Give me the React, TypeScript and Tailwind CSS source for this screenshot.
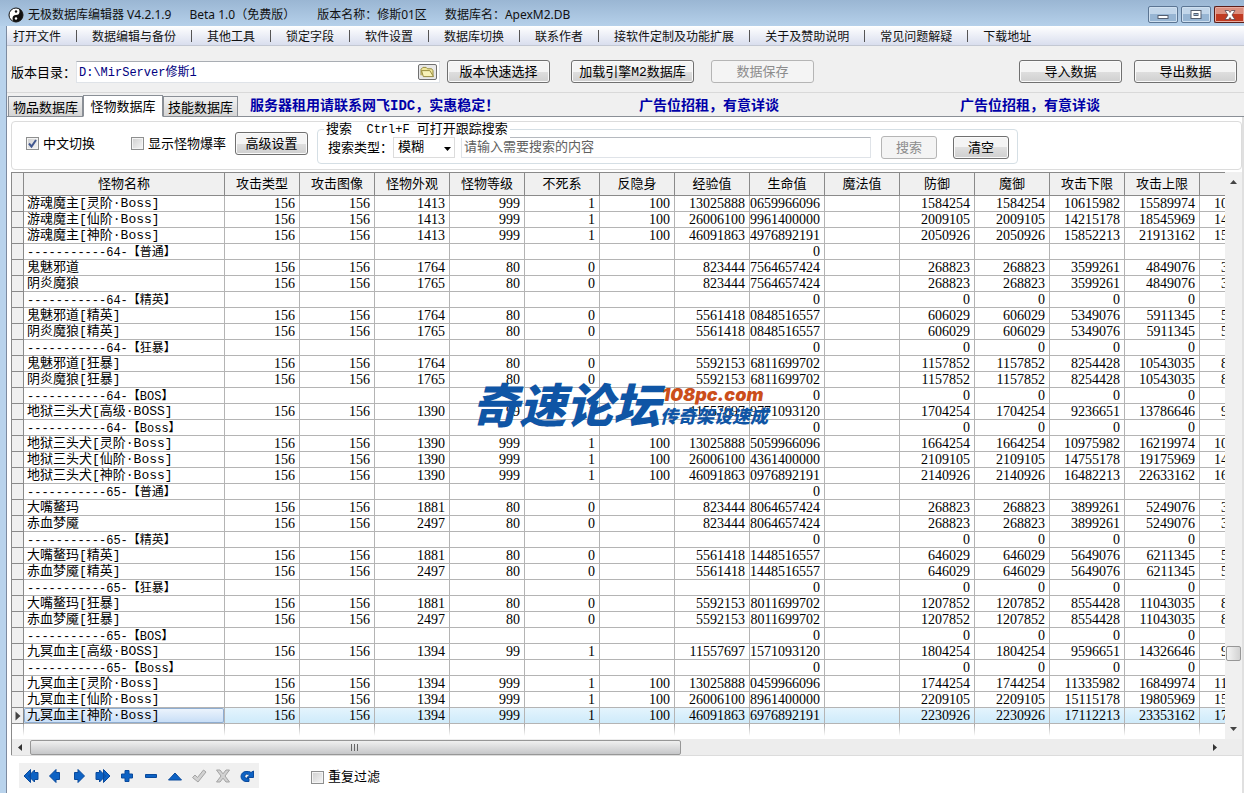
import { useState } from "react";
import clsx from "clsx";

const menuItems = [
  "打开文件",
  "数据编辑与备份",
  "其他工具",
  "锁定字段",
  "软件设置",
  "数据库切换",
  "联系作者",
  "接软件定制及功能扩展",
  "关于及赞助说明",
  "常见问题解疑",
  "下载地址",
];

const tabs = ["物品数据库", "怪物数据库", "技能数据库"];

const columns = [
  "攻击类型",
  "攻击图像",
  "怪物外观",
  "怪物等级",
  "不死系",
  "反隐身",
  "经验值",
  "生命值",
  "魔法值",
  "防御",
  "魔御",
  "攻击下限",
  "攻击上限",
];

// name | type | image | look | level | undead | anti-hide | exp | hp | mp | def | mdef | min | max | next column
const data = `
游魂魔主[灵阶·Boss]|156|156|1413|999|1|100|13025888|0659966096||1584254|1584254|10615982|15589974|10
游魂魔主[仙阶·Boss]|156|156|1413|999|1|100|26006100|9961400000||2009105|2009105|14215178|18545969|14
游魂魔主[神阶·Boss]|156|156|1413|999|1|100|46091863|4976892191||2050926|2050926|15852213|21913162|15
-----------64-【普通】||||||||0||||||
鬼魅邪道|156|156|1764|80|0||823444|7564657424||268823|268823|3599261|4849076|3
阴炎魔狼|156|156|1765|80|0||823444|7564657424||268823|268823|3599261|4849076|3
-----------64-【精英】||||||||0||0|0|0|0|
鬼魅邪道[精英]|156|156|1764|80|0||5561418|0848516557||606029|606029|5349076|5911345|5
阴炎魔狼[精英]|156|156|1765|80|0||5561418|0848516557||606029|606029|5349076|5911345|5
-----------64-【狂暴】||||||||0||0|0|0|0|
鬼魅邪道[狂暴]|156|156|1764|80|0||5592153|6811699702||1157852|1157852|8254428|10543035|8
阴炎魔狼[狂暴]|156|156|1765|80|0||5592153|6811699702||1157852|1157852|8254428|10543035|8
-----------64-【BOS】||||||||0||0|0|0|0|
地狱三头犬[高级·BOSS]|156|156|1390|99|1||11557697|9771093120||1704254|1704254|9236651|13786646|9
-----------64-【Boss】||||||||0||0|0|0|0|
地狱三头犬[灵阶·Boss]|156|156|1390|999|1|100|13025888|5059966096||1664254|1664254|10975982|16219974|10
地狱三头犬[仙阶·Boss]|156|156|1390|999|1|100|26006100|4361400000||2109105|2109105|14755178|19175969|14
地狱三头犬[神阶·Boss]|156|156|1390|999|1|100|46091863|0976892191||2140926|2140926|16482213|22633162|16
-----------65-【普通】||||||||0||||||
大嘴鳌玛|156|156|1881|80|0||823444|8064657424||268823|268823|3899261|5249076|3
赤血梦魇|156|156|2497|80|0||823444|8064657424||268823|268823|3899261|5249076|3
-----------65-【精英】||||||||0||0|0|0|0|
大嘴鳌玛[精英]|156|156|1881|80|0||5561418|1448516557||646029|646029|5649076|6211345|5
赤血梦魇[精英]|156|156|2497|80|0||5561418|1448516557||646029|646029|5649076|6211345|5
-----------65-【狂暴】||||||||0||0|0|0|0|
大嘴鳌玛[狂暴]|156|156|1881|80|0||5592153|8011699702||1207852|1207852|8554428|11043035|8
赤血梦魇[狂暴]|156|156|2497|80|0||5592153|8011699702||1207852|1207852|8554428|11043035|8
-----------65-【BOS】||||||||0||0|0|0|0|
九冥血主[高级·BOSS]|156|156|1394|99|1||11557697|1571093120||1804254|1804254|9596651|14326646|9
-----------65-【Boss】||||||||0||0|0|0|0|
九冥血主[灵阶·Boss]|156|156|1394|999|1|100|13025888|0459966096||1744254|1744254|11335982|16849974|11
九冥血主[仙阶·Boss]|156|156|1394|999|1|100|26006100|8961400000||2209105|2209105|15115178|19805969|15
九冥血主[神阶·Boss]|156|156|1394|999|1|100|46091863|6976892191||2230926|2230926|17112213|23353162|17
`;

const rows = data
  .trim()
  .split("\n")
  .map((line) => line.split("|"));

const navIcons = [
  { label: "第一条", path: "M5.500 8L11.500 2v2.500H15v7h-3.500V14zM1 8L7.500 1.500V14.500z" },
  { label: "上一条", path: "M2.500 8L9 1.500V4.500h3.500v7H9v3z" },
  { label: "下一条", path: "M13.500 8L7 1.500V4.500H3.500v7H7v3z" },
  { label: "最后一条", path: "M10.500 8L4.500 2v2.500H1v7h3.500V14zM15 8L8.500 1.500V14.500z" },
  { label: "添加", path: "M6 2.500h4V6h3.500v4H10v3.500H6V10H2.500V6H6z" },
  { label: "删除", path: "M2.500 6.500h11v3h-11z" },
  { label: "编辑", path: "M1.500 12L8 5l6.500 7z" },
  { label: "提交", path: "M1.500 9.500L4 7l2.500 2.500L12.500 2 15 4 7 14z", off: true },
  { label: "取消", path: "M1.500 2H5l3 3.800L11 2h3.500L10 8l4.500 6H11l-3-3.800L5 14H1.500L6 8z", off: true },
  {
    label: "刷新",
    path: "M10 13.500H7A5 5 0 0 1 7 3.500h2.500a5 5 0 0 1 2.500 1l2.500-1.500V9.500H8l2-2A2.200 2.200 0 1 0 8 10.500h2z",
  },
];

function Button({
  children,
  className,
  disabled,
}: {
  children: React.ReactNode;
  className?: string;
  disabled?: boolean;
}) {
  return (
    <button
      type="button"
      disabled={disabled}
      className={clsx(
        "h-[23px] shrink-0 rounded-[3px] border pt-[3px] text-center leading-[18px] whitespace-nowrap",
        disabled
          ? "border-[#b5b5b5] bg-[#f4f4f4] text-[#8c8c8c]"
          : "border-[#707070] bg-linear-to-b from-[#f4f4f4] from-50% via-[#dfdfdf] via-50% to-[#cfcfcf] text-black shadow-[inset_0_0_0_1px_#fafafa]",
        className
      )}
    >
      {children}
    </button>
  );
}

function Check({ label, defaultChecked }: { label: string; defaultChecked?: boolean }) {
  const [checked, setChecked] = useState(!!defaultChecked);
  return (
    <label className="flex items-center gap-1 whitespace-nowrap leading-4">
      <span className="relative flex size-[13px]">
        <input
          type="checkbox"
          checked={checked}
          onChange={(e) => setChecked(e.target.checked)}
          className="size-[13px] appearance-none border border-[#8e8f8f] bg-linear-to-br from-[#cfcfcf] to-[#f6f6f6] shadow-[inset_0_0_0_1px_#f4f4f4]"
        />
        {checked && (
          <svg viewBox="0 0 13 13" className="pointer-events-none absolute inset-0 size-[13px]">
            <path d="M3 6.500l2.500 3L10 3" fill="none" stroke="#41578f" strokeWidth="2" />
          </svg>
        )}
      </span>
      <span className="pt-[2px]">{label}</span>
    </label>
  );
}

function TitleBar() {
  return (
    <header className="flex h-[26px] items-center bg-linear-to-b from-[#9ab6d3] to-[#b5d0ea] pl-2 text-xs">
      <svg viewBox="0 0 16 16" className="mt-1 mr-1 size-4">
        <circle cx="8" cy="8" r="7" fill="#fff" stroke="#111" />
        <path d="M8 1a7 7 0 0 1 0 14 3.500 3.500 0 0 1 0-7 3.500 3.500 0 0 0 0-7z" fill="#111" />
        <circle cx="8" cy="4.500" r="1.200" fill="#111" />
        <circle cx="8" cy="11.500" r="1.200" fill="#fff" />
      </svg>
      <h1 className="mt-1 flex gap-[18px] whitespace-nowrap font-['Noto_Sans','Noto_Sans_CJK_SC',sans-serif] leading-5 text-[#111]">
        <span>无极数据库编辑器 V4.2.1.9</span>
        <span className="mr-1">Beta 1.0（免费版）</span>
        <span>版本名称：修斯01区</span>
        <span>数据库名：ApexM2.DB</span>
      </h1>
      <div className="ml-auto flex gap-[3px] self-end pb-[3px]">
        <button
          type="button"
          aria-label="最小化"
          className="flex h-[17px] w-[30px] items-center justify-center rounded-xs border border-[#5b7593] bg-linear-to-b from-[#c2d6ea] from-50% to-[#97b5d3] to-50% shadow-[inset_0_0_0_1px_#cfe0f0]"
        >
          <svg viewBox="0 0 12 10" className="h-[10px] w-3">
            <rect x="1" y="5.500" width="10" height="3" fill="#fff" stroke="#555f70" />
          </svg>
        </button>
        <button
          type="button"
          aria-label="最大化"
          className="flex h-[17px] w-[30px] items-center justify-center rounded-xs border border-[#5b7593] bg-linear-to-b from-[#c2d6ea] from-50% to-[#97b5d3] to-50% shadow-[inset_0_0_0_1px_#cfe0f0]"
        >
          <svg viewBox="0 0 12 10" className="h-[10px] w-3">
            <rect x="1" y=".5" width="10" height="8" fill="#fff" stroke="#555f70" />
            <rect x="4" y="3.500" width="4" height="2" fill="#9db9d6" stroke="#555f70" />
          </svg>
        </button>
        <button
          type="button"
          aria-label="关闭"
          className="flex h-[17px] w-[30px] items-center justify-center rounded-l-xs border border-r-0 border-[#5c1d17] bg-linear-to-b from-[#dc8f7f] from-50% to-[#c03a22] to-50% shadow-[inset_0_0_0_1px_#e9aca0]"
        >
          <svg viewBox="0 0 12 10" className="h-[10px] w-3">
            <path
              d="M1 .5h3.500L6 2.500 7.500.5H11L8 5l3 4.500H7.500L6 7.500l-1.500 2H1L4 5z"
              fill="#fff"
              stroke="#5a4650"
              strokeWidth=".8"
            />
          </svg>
        </button>
      </div>
    </header>
  );
}

function MonsterTable() {
  return (
    <table className="w-full table-fixed border-separate border-spacing-0">
      <colgroup>
        <col className="w-3" />
        <col className="w-[201px]" />
        {columns.map((c) => (
          <col key={c} className="w-[75px]" />
        ))}
        <col />
      </colgroup>
      <thead>
        <tr className="h-6 bg-[#f0f0f0]">
          <th className="border-y border-r border-[#8a8a8a]" />
          <th className="border-y border-r border-[#8a8a8a] px-0 pt-[2px] pb-0 font-normal leading-5">
            怪物名称
          </th>
          {columns.map((c) => (
            <th
              key={c}
              className="border-y border-r border-[#8a8a8a] px-0 pt-[2px] pb-0 font-normal leading-5"
            >
              {c}
            </th>
          ))}
          <th className="border-y border-[#8a8a8a]" />
        </tr>
      </thead>
      <tbody>
        {rows.map(([name, ...cells], i) => {
          const selected = i === rows.length - 1;
          return (
            <tr
              key={i}
              className={clsx("h-4", selected && "bg-linear-to-b from-[#e4f4fd] to-[#cdeafa]")}
            >
              <td className="border-r border-b border-[#8a8a8a] bg-[#f0f0f0] p-0">
                {selected && (
                  <svg viewBox="0 0 6 10" className="ml-[3px] h-[10px] w-[6px]">
                    <path d="M.5.500L5.500 5l-5 4.500z" fill="#444" />
                  </svg>
                )}
              </td>
              <td className="border-r border-b border-[#b4b4b4] p-0">
                <div
                  className={clsx(
                    "h-[15px] overflow-hidden pl-[3px] whitespace-nowrap",
                    name.startsWith("-") ? "text-xs leading-[18px]" : "leading-4",
                    selected &&
                      "rounded-xs bg-linear-to-b from-[#eef5fd] to-[#c6ddf6] shadow-[inset_0_0_0_1px_#8fadd0]"
                  )}
                >
                  {name}
                </div>
              </td>
              {cells.map((cell, j) =>
                j < columns.length ? (
                  <td key={j} className="border-r border-b border-[#b4b4b4] p-0">
                    <div className="flex h-[15px] justify-end overflow-hidden pr-1 font-['Liberation_Serif',serif] text-sm leading-4">
                      {cell}
                    </div>
                  </td>
                ) : (
                  <td key={j} className="border-b border-[#b4b4b4] p-0">
                    <div
                      className={clsx(
                        "h-[15px] overflow-hidden font-['Liberation_Serif',serif] text-sm leading-4",
                        cell.length > 1 ? "pl-[14px]" : "pl-[21px]"
                      )}
                    >
                      {cell}
                    </div>
                  </td>
                )
              )}
            </tr>
          );
        })}
        {/* column rules fade out below the last record */}
        <tr className="h-[15px]">
          {Array.from({ length: columns.length + 2 }, (_, i) => (
            <td
              key={i}
              className="bg-linear-to-b from-[#a8a8a8] to-white bg-[length:1px_12px] bg-right-top bg-no-repeat p-0"
            />
          ))}
          <td />
        </tr>
      </tbody>
    </table>
  );
}

export default function App() {
  const [tab, setTab] = useState("怪物数据库");

  return (
    <div className="flex min-h-screen flex-col overflow-hidden bg-[#b9d3ec] font-['Liberation_Mono','Noto_Sans_CJK_SC',monospace] text-[13px] text-black">
      <TitleBar />

      <div className="ml-[6px] flex flex-1 flex-col border-l border-[#7d8ba0] bg-[#f0f0f0]">
        <nav className="flex h-5 items-center border-b border-[#c3c8d3] bg-linear-to-b from-white to-[#d9deee] pl-[6px] font-['Noto_Sans_CJK_SC',sans-serif] text-xs">
          {menuItems.map((item, i) => (
            <div key={item} className="flex items-center">
              {i > 0 && <span className="mx-[15px] h-3 w-px bg-[#555]" />}
              <a href="#" className="whitespace-nowrap leading-4 text-[#111]">
                {item}
              </a>
            </div>
          ))}
        </nav>

        {/* Toolbar */}
        <div className="flex h-[47px] items-center border-b border-[#d9d9d9] pt-[5px] pr-[7px] pl-1">
          <label htmlFor="dir" className="w-[65px] shrink-0 pt-1 whitespace-nowrap">
            版本目录：
          </label>
          <div className="flex h-[22px] max-w-[364px] flex-1 items-center border border-[#dfe3e8] border-t-[#a9adb3] bg-white">
            <input
              id="dir"
              defaultValue="D:\MirServer修斯1"
              className="min-w-0 flex-1 bg-transparent px-[2px] pt-[2px] text-xs text-[#000080] outline-none"
            />
            <button
              type="button"
              aria-label="浏览"
              className="mr-[2px] flex h-4 w-[19px] items-center justify-center rounded-xs border border-[#707070] bg-[#e8e8e8]"
            >
              <svg viewBox="0 0 16 13" className="h-3 w-[15px]">
                <path d="M1 10V3.500L3 1.500h3.500L8 3h4.500L14 5v6" fill="#efe69a" stroke="#8f8335" />
                <path d="M1.500 5h9l4 6.500h-11z" fill="#f8f2b8" stroke="#8f8335" />
              </svg>
            </button>
          </div>
          <Button className="ml-[7px] w-[103px]">版本快速选择</Button>
          <Button className="ml-[21px] w-[123px]">加载引擎M2数据库</Button>
          <Button className="ml-[17px] w-[103px]" disabled>
            数据保存
          </Button>
          <Button className="ml-auto w-[103px]">导入数据</Button>
          <Button className="ml-3 w-[103px]">导出数据</Button>
        </div>

        {/* Tabs and ads */}
        <div className="flex h-6 items-end border-b border-[#8a8f96] pl-px font-['Noto_Sans_CJK_SC',sans-serif]">
          {tabs.map((t) => (
            <button
              key={t}
              type="button"
              onClick={() => setTab(t)}
              className={clsx(
                "whitespace-nowrap border border-[#8a8f96] text-center leading-5",
                t === tab
                  ? "-mb-px h-[22px] w-20 border-b-white bg-white"
                  : "h-5 w-[75px] border-b-0 bg-linear-to-b from-[#f2f2f2] to-[#d4d4d4]"
              )}
            >
              {t}
            </button>
          ))}
          <div className="ml-3 grid h-6 flex-1 grid-cols-[389px_321px_auto] items-center pt-1 whitespace-nowrap font-['Liberation_Mono','Noto_Sans_CJK_SC',monospace] text-sm font-bold leading-5 text-[#0000a8]">
            <span>服务器租用请联系网飞IDC，实惠稳定！</span>
            <span>广告位招租，有意详谈</span>
            <span>广告位招租，有意详谈</span>
          </div>
        </div>

        <main className="flex-1 border-r-2 border-[#e0e0e0] bg-white pl-1">
          {/* Filter bar */}
          <section className="mt-1 flex h-[49px] items-center rounded border border-[#dcdcdc] pb-1 pl-[14px]">
            <Check label="中文切换" defaultChecked />
            <div className="ml-9">
              <Check label="显示怪物爆率" />
            </div>
            <Button className="ml-[9px] w-[73px]">高级设置</Button>
            <fieldset className="relative mt-[6px] ml-[9px] flex h-[35px] items-center rounded border border-[#d5dfe5] pt-[2px] pr-2 pl-[10px]">
              <legend className="absolute -top-[8px] left-[6px] bg-white px-[2px] leading-[15px] whitespace-pre">
                搜索<span className="text-xs">  Ctrl+F </span>可打开跟踪搜索
              </legend>
              <label htmlFor="kind" className="w-[65px] pt-[2px] whitespace-nowrap leading-4">
                搜索类型：
              </label>
              <div className="relative">
                <select
                  id="kind"
                  className="h-[21px] w-[62px] appearance-none border border-[#dcdcdc] bg-white pt-px pl-1 leading-4"
                >
                  <option>模糊</option>
                  <option>精确</option>
                </select>
                <svg
                  viewBox="0 0 7 4"
                  className="pointer-events-none absolute top-[10px] right-1 h-1 w-[7px]"
                >
                  <path d="M0 0h7L3.500 4z" />
                </svg>
              </div>
              <input
                aria-label="搜索内容"
                placeholder="请输入需要搜索的内容"
                className="ml-[6px] h-[21px] w-[410px] border border-[#dfe3e8] border-t-[#b5b9bf] bg-white px-[2px] leading-4 placeholder:text-[#606060]"
              />
              <Button className="ml-[10px] w-14" disabled>
                搜索
              </Button>
              <Button className="ml-4 w-14">清空</Button>
            </fieldset>
          </section>

          {/* Grid */}
          <section className="mt-[2px] border-l border-[#8a8a8a]">
            <div className="flex">
              <div className="relative min-w-0 flex-1">
                <MonsterTable />
                <div className="pointer-events-none absolute top-[205px] left-[460px] flex whitespace-nowrap font-['Noto_Sans_CJK_SC',sans-serif] font-black italic">
                  <span className="text-[47px] leading-[52px] text-[#0f55a5]">奇速论坛</span>
                  <span className="flex flex-col pt-2">
                    <span className="pl-[2px] font-['Inter','Noto_Sans_CJK_SC',sans-serif] text-lg leading-5 text-[#cb4e1b]">
                      108pc.com
                    </span>
                    <span className="text-lg leading-5 text-[#0f55a5]">传奇架设速成</span>
                  </span>
                </div>
              </div>
              <div className="flex w-[17px] flex-col items-center bg-[#f0f0f0]">
                <svg viewBox="0 0 7 4" className="mt-2 h-1 w-[7px]">
                  <path d="M3.500 0L7 4H0z" fill="#444" />
                </svg>
                <div className="flex-1" />
                <div className="h-[15px] w-[15px] rounded-xs border border-[#979797] bg-linear-to-r from-[#f5f5f5] to-[#d2d2d2]" />
                <div className="h-[66px]" />
                <svg viewBox="0 0 7 4" className="mb-2 h-1 w-[7px]">
                  <path d="M0 0h7L3.500 4z" fill="#444" />
                </svg>
              </div>
            </div>
            <div className="flex h-4 items-center bg-[#ededed] pr-[25px]">
              <svg viewBox="0 0 4 7" className="mr-2 ml-[6px] h-[7px] w-1">
                <path d="M4 0v7L0 3.500z" fill="#333" />
              </svg>
              <div className="flex flex-1">
                <div className="flex h-[15px] w-[55%] items-center justify-center gap-px rounded-xs border border-[#979797] bg-linear-to-b from-[#f0f0f0] to-[#c6c7c9]">
                  <span className="h-[7px] w-[2px] border-l border-[#666]" />
                  <span className="h-[7px] w-[2px] border-l border-[#666]" />
                  <span className="h-[7px] w-[2px] border-l border-[#666]" />
                </div>
              </div>
              <svg viewBox="0 0 4 7" className="h-[7px] w-1">
                <path d="M0 0v7l4-3.500z" fill="#333" />
              </svg>
            </div>
          </section>

          {/* Record navigator */}
          <footer className="flex items-start border-t border-[#dcdcdc] pt-[7px] pl-2">
            <div className="flex bg-[#f0f0f0]">
              {navIcons.map((icon) => (
                <button
                  key={icon.label}
                  type="button"
                  aria-label={icon.label}
                  disabled={icon.off}
                  className="flex h-[25px] w-6 items-center justify-center"
                >
                  <svg viewBox="0 0 16 16" className="size-4">
                    <path
                      d={icon.path}
                      fill={icon.off ? "#d2d2d2" : "#0d62c4"}
                      stroke={icon.off ? "#a3a3a3" : "#0a4a9c"}
                    />
                  </svg>
                </button>
              ))}
            </div>
            <div className="mt-[5px] ml-[52px]">
              <Check label="重复过滤" />
            </div>
          </footer>
        </main>
      </div>
    </div>
  );
}
